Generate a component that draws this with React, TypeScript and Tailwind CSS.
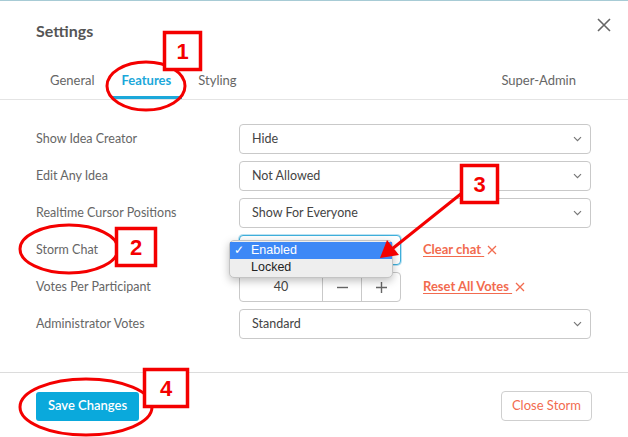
import React from "react"

const FONT = "font-['Lato','Liberation_Sans',sans-serif]"

function Chevron() {
  return (
    <svg className="h-[6px] w-[9px]" viewBox="0 0 9 6" fill="none">
      <path d="M1 1.2l3.5 3.5L8 1.2" stroke="#777" strokeWidth="1.2" />
    </svg>
  )
}

function SmallX({ color = "#f26b4f", size = 10 }: { color?: string; size?: number }) {
  return (
    <svg width={size} height={size} viewBox="0 0 10 10" fill="none">
      <path d="M1 1l8 8M9 1l-8 8" stroke={color} strokeWidth="1.3" />
    </svg>
  )
}

function Select({ value, focused, className = "" }: { value: string; focused?: boolean; className?: string }) {
  return (
    <div
      className={`flex h-[30px] items-center justify-between rounded-[4px] border bg-white pl-[12px] pr-[8px] text-[12.5px] ${
        focused
          ? "border-[#3fb0dc] text-transparent shadow-[0_0_0_1px_rgba(63,176,220,0.35)]"
          : "border-[#c9c9c9] text-[#444]"
      } ${className}`}
    >
      <span>{focused ? "" : value}</span>
      <Chevron />
    </div>
  )
}

function ActionLink({ label }: { label: string }) {
  return (
    <div className="flex items-center gap-[3px] text-[13px] font-bold text-[#f26b4f]">
      <span className="underline underline-offset-2">{label}&nbsp;</span>
      <SmallX />
    </div>
  )
}

function Row({ label, children }: { label: string; children: React.ReactNode }) {
  return (
    <div className="grid h-[30px] grid-cols-[203px_1fr] items-center">
      <span className="text-[12.5px] text-[#666]">{label}</span>
      {children}
    </div>
  )
}

function Annotations() {
  const red = "#f40000"
  return (
    <svg className="pointer-events-none absolute inset-0" width="628" height="437" viewBox="0 0 628 437">
      <ellipse cx="146" cy="85" rx="39" ry="24" fill="none" stroke={red} strokeWidth="3" />
      <ellipse cx="69" cy="248" rx="49" ry="24" fill="none" stroke={red} strokeWidth="3" />
      <ellipse cx="86" cy="406" rx="66" ry="28" fill="none" stroke={red} strokeWidth="3" />

      <rect x="164.5" y="31.5" width="36" height="37" fill="white" stroke={red} strokeWidth="3.5" />
      <rect x="116.5" y="227.5" width="39" height="37" fill="white" stroke={red} strokeWidth="3.5" />
      <rect x="461.5" y="164.5" width="36" height="37" fill="white" stroke={red} strokeWidth="3.5" />
      <rect x="144.5" y="368.5" width="43" height="37" fill="white" stroke={red} strokeWidth="3.5" />

      <g fill={red} fontFamily="Liberation Sans, Arial, sans-serif" fontWeight="700" fontSize="22" textAnchor="middle">
        <text x="182.5" y="58">1</text>
        <text x="136" y="254">2</text>
        <text x="479.5" y="191">3</text>
        <text x="166" y="395">4</text>
      </g>

      <line x1="462" y1="192" x2="392" y2="248" stroke={red} strokeWidth="3" />
      <polygon points="380,257 387,239 399,254" fill={red} />
    </svg>
  )
}

export default function App() {
  return (
    <div className={`relative h-[437px] w-[628px] overflow-hidden border-t border-[#a7cbd5] bg-white ${FONT}`}>
      <div className="flex items-start justify-between pl-[36px] pr-[17px] pt-[20px]">
        <h2 className="text-[16px] font-bold leading-[20px] text-[#555]">Settings</h2>
        <svg className="mt-[-3px]" width="14" height="14" viewBox="0 0 14 14" fill="none">
          <path d="M1 1l12 12M13 1L1 13" stroke="#666" strokeWidth="1.6" />
        </svg>
      </div>

      <div className="mt-[23px] flex border-b border-[#e4e4e4] pl-[39px] pr-[41px] text-[13px] leading-[16px] text-[#666]">
        <div className="flex gap-[5px]">
          <div className="border-b-[3px] border-transparent px-[11px] pb-[8px] pt-[8px]">General</div>
          <div className="border-b-[3px] border-[#1ca8da] px-[11px] pb-[8px] pt-[8px] font-bold text-[#1ca8da]">Features</div>
          <div className="border-b-[3px] border-transparent px-[11px] pb-[8px] pt-[8px]">Styling</div>
        </div>
        <div className="ml-auto border-b-[3px] border-transparent px-[11px] pb-[8px] pt-[8px]">Super-Admin</div>
      </div>

      <div className="flex flex-col gap-[7px] pl-[36px] pr-[37px] pt-[24px]">
        <Row label="Show Idea Creator">
          <Select value="Hide" />
        </Row>
        <Row label="Edit Any Idea">
          <Select value="Not Allowed" />
        </Row>
        <Row label="Realtime Cursor Positions">
          <Select value="Show For Everyone" />
        </Row>
        <Row label="Storm Chat">
          <div className="flex items-center gap-[22px]">
            <div className="relative">
              <Select value="Enabled" focused className="w-[162px]" />
              <div className="absolute left-[-10px] top-[5px] w-[164px] rounded-[5px] border border-[#c4c4c4] bg-[#eeeeee] py-px font-['Liberation_Sans',sans-serif] text-[12.5px] leading-[17px] text-[#222] shadow-[0_3px_8px_rgba(0,0,0,0.25)]">
                <div className="flex items-center bg-[#3d88f6] text-white">
                  <span className="w-[21px] pl-[4px] text-[12px]">✓</span>
                  <span>Enabled</span>
                </div>
                <div className="flex items-center">
                  <span className="w-[21px]" />
                  <span>Locked</span>
                </div>
              </div>
            </div>
            <ActionLink label="Clear chat" />
          </div>
        </Row>
        <Row label="Votes Per Participant">
          <div className="flex items-center gap-[22px]">
            <div className="flex h-[30px] w-[162px] rounded-[4px] border border-[#c9c9c9] text-[12.5px] text-[#444]">
              <div className="flex w-[83px] items-center justify-center border-r border-[#c9c9c9]">40</div>
              <div className="flex w-[39px] items-center justify-center border-r border-[#c9c9c9]">
                <svg width="13" height="13" viewBox="0 0 13 13"><path d="M1 6.5h11" stroke="#666" strokeWidth="1.4" /></svg>
              </div>
              <div className="flex flex-1 items-center justify-center">
                <svg width="13" height="13" viewBox="0 0 13 13"><path d="M1 6.5h11M6.5 1v11" stroke="#666" strokeWidth="1.4" /></svg>
              </div>
            </div>
            <ActionLink label="Reset All Votes" />
          </div>
        </Row>
        <Row label="Administrator Votes">
          <Select value="Standard" />
        </Row>
      </div>

      <div className="mt-[33px] flex items-center justify-between border-t border-[#dcdcdc] pl-[36px] pr-[36px] pt-[18px]">
        <button className="h-[29px] w-[103px] rounded-[3px] bg-[#0aa9dc] text-[13px] font-semibold text-white">
          Save Changes
        </button>
        <button className="h-[30px] w-[91px] rounded-[4px] border border-[#cfcfcf] bg-white text-[13px] text-[#f26b4f]">
          Close Storm
        </button>
      </div>

      <Annotations />
    </div>
  )
}
